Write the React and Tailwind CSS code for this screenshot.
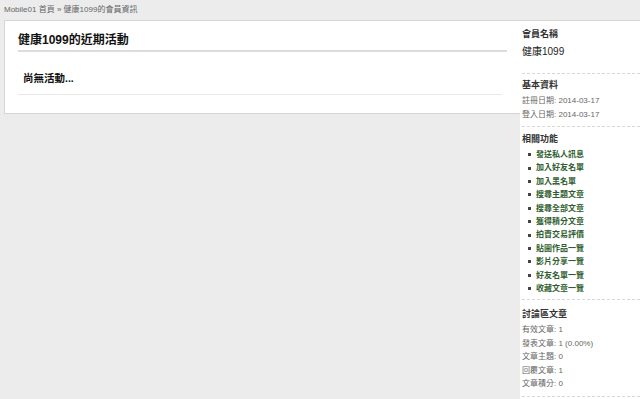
import React from "react";

const links = [
  "發送私人訊息",
  "加入好友名單",
  "加入黑名單",
  "搜尋主題文章",
  "搜尋全部文章",
  "獲得積分文章",
  "拍賣交易評價",
  "貼圖作品一覽",
  "影片分享一覽",
  "好友名單一覽",
  "收藏文章一覽",
];

const stats = ["有效文章: 1", "發表文章: 1 (0.00%)", "文章主題: 0", "回覆文章: 1", "文章積分: 0"];

const font = { fontFamily: '"Liberation Sans", "Noto Sans CJK TC", sans-serif' };

const App = () => {
  return (
    <div className="min-h-[399px] bg-[#ececec] text-[#333]" style={font}>
      <div className="h-[20px] pl-[4px] pt-[5px] text-[8px] leading-[10px] text-[#666]">
        Mobile01 首頁 » 健康1099的會員資訊
      </div>
      <div className="ml-[4px] flex border-t border-[#d6d6d6]">
        <div className="self-start flex-1 border-l border-b border-[#d6d6d6] bg-white pl-[13px] pr-[13px] pt-[11px] pb-[18px]">
          <h2 className="border-b-2 border-[#dcdcdc] pb-[2px] text-[12px] font-bold leading-[16px] text-[#111]">
            健康1099的近期活動
          </h2>
          <div className="mr-[5px] mt-[19px] border-b border-[#eaeaea] pb-[9px] pl-[5px] text-[10.5px] font-bold leading-[14px] text-[#111]">
            尚無活動...
          </div>
        </div>
        <div className="w-[120px] min-h-[378px] bg-white pl-[2px]">
          <div className="border-b border-dashed border-[#d8d8d8] pt-[6px] pb-[14px]">
            <div className="text-[9px] font-bold leading-[14px]">會員名稱</div>
            <div className="mt-[4px] text-[10px] leading-[14px] text-[#222]">健康1099</div>
          </div>
          <div className="border-b border-dashed border-[#d8d8d8] pt-[4px] pb-[4px]">
            <div className="text-[9px] font-bold leading-[14px]">基本資料</div>
            <div className="mt-[2px] text-[8px] leading-[14px] text-[#666]">註冊日期: 2014-03-17</div>
            <div className="text-[8px] leading-[14px] text-[#666]">登入日期: 2014-03-17</div>
          </div>
          <div className="border-b border-dashed border-[#d8d8d8] pt-[5px] pb-[4px]">
            <div className="text-[9px] font-bold leading-[14px]">相關功能</div>
            <ul className="mt-[2px] pl-[6px]">
              {links.map((l) => (
                <li key={l} className="flex items-center gap-[5px] text-[8px] font-bold leading-[13.4px] text-[#2f5e2f]">
                  <span className="h-[3px] w-[3px] bg-[#444]" />
                  {l}
                </li>
              ))}
            </ul>
          </div>
          <div className="border-b border-dashed border-[#d8d8d8] pt-[7px] pb-[5px]">
            <div className="text-[9px] font-bold leading-[14px]">討論區文章</div>
            <div className="mt-[2px]">
              {stats.map((s) => (
                <div key={s} className="text-[8px] leading-[13.5px] text-[#666]">
                  {s}
                </div>
              ))}
            </div>
          </div>
        </div>
      </div>
    </div>
  );
};

export default App;
